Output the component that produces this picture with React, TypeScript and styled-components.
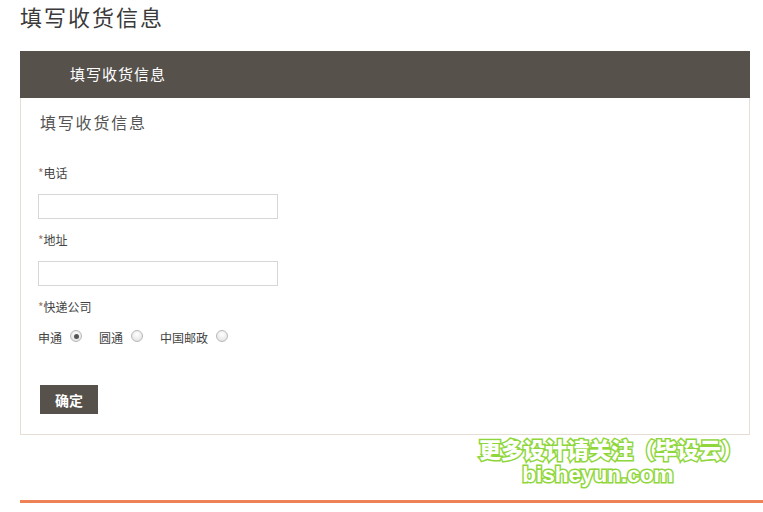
import React from "react";
import styled, { createGlobalStyle } from "styled-components";

const Global = createGlobalStyle`
  html, body { margin: 0; padding: 0; background: #fff; }
  body { font-family: "Noto Sans CJK SC", "Noto Sans", sans-serif; color: #333; }
  * { box-sizing: border-box; }
`;

const Page = styled.div`
  position: relative;
  width: 763px;
  height: 512px;
  padding: 0 13px 0 20px;
  overflow: hidden;
`;

const PageTitle = styled.h1`
  margin: 0;
  padding-top: 1px;
  height: 51px;
  font-size: 22px;
  line-height: 30px;
  letter-spacing: 2px;
  font-weight: 400;
  color: #3a3a3a;
`;

const Bar = styled.div`
  height: 47px;
  background: #57514c;
  color: #fff;
  font-size: 15px;
  line-height: 45px;
  letter-spacing: 1px;
  padding-left: 50px;
`;

const Panel = styled.div`
  border: 1px solid #e6ddd4;
  border-top: none;
  height: 337px;
  padding: 12px 18px 0 17px;
`;

const PanelTitle = styled.h2`
  margin: 0 0 0 2px;
  font-size: 16px;
  line-height: 24px;
  letter-spacing: 1.8px;
  font-weight: 400;
  color: #555;
`;

const Label = styled.div<{ $top: number }>`
  margin-top: ${(p) => p.$top}px;
  font-size: 12px;
  line-height: 16px;
  color: #444;
`;

const Star = styled.span`
  color: #9a7a6a;
`;

const TextInput = styled.input`
  display: block;
  margin-top: 13px;
  width: 240px;
  height: 25px;
  border: 1px solid #d6d6d6;
  outline: none;
  padding: 0 4px;
`;

const RadioRow = styled.div`
  margin-top: 15px;
  display: flex;
  align-items: center;
  font-size: 12px;
  line-height: 16px;
  color: #444;
`;

const RadioItem = styled.label`
  display: flex;
  align-items: center;
  gap: 8px;
  margin-right: 17px;
`;

const RadioDot = styled.span<{ $on?: boolean }>`
  width: 12px;
  height: 12px;
  border-radius: 50%;
  border: 1px solid #b8b8b8;
  background: radial-gradient(circle at 50% 35%, #ffffff 0%, #e2e2e2 85%);
  margin-top: -4px;
  display: flex;
  align-items: center;
  justify-content: center;
  &::after {
    content: "";
    display: ${(p) => (p.$on ? "block" : "none")};
    width: 5px;
    height: 5px;
    border-radius: 50%;
    background: #555;
  }
`;

const Button = styled.button`
  display: block;
  margin: 39px 0 0 2px;
  width: 58px;
  height: 29px;
  background: #57514c;
  border: none;
  color: #fff;
  font-family: inherit;
  font-size: 14px;
  font-weight: 700;
  padding: 0;
`;

const OrangeLine = styled.div`
  margin-top: 65px;
  margin-right: -13px;
  height: 3px;
  background: #ec8256;
`;

const Watermark = styled.div`
  position: absolute;
  left: 479px;
  top: 434px;
  width: 260px;
  text-align: center;
  font-family: "Noto Sans CJK SC", sans-serif;
  font-weight: 900;
  color: #fff;
  -webkit-text-stroke: 3px #8ed63a;
  paint-order: stroke fill;
  pointer-events: none;
`;

const WLine1 = styled.div`
  font-size: 22px;
  line-height: 28px;
`;

const WLine2 = styled.div`
  font-family: "Liberation Sans", Arial, sans-serif;
  font-weight: 700;
  font-size: 22.5px;
  line-height: 26px;
  margin-left: -22px;
`;

export default function App() {
  return (
    <>
      <Global />
      <Page>
        <PageTitle>填写收货信息</PageTitle>
        <Bar>填写收货信息</Bar>
        <Panel>
          <PanelTitle>填写收货信息</PanelTitle>
          <Label $top={31}>
            <Star>*</Star>电话
          </Label>
          <TextInput type="text" />
          <Label $top={13}>
            <Star>*</Star>地址
          </Label>
          <TextInput type="text" />
          <Label $top={13}>
            <Star>*</Star>快递公司
          </Label>
          <RadioRow>
            <RadioItem>
              申通 <RadioDot $on />
            </RadioItem>
            <RadioItem>
              圆通 <RadioDot />
            </RadioItem>
            <RadioItem>
              中国邮政 <RadioDot />
            </RadioItem>
          </RadioRow>
          <Button>确定</Button>
        </Panel>
        <OrangeLine />
        <Watermark>
          <WLine1>更多设计请关注（毕设云）</WLine1>
          <WLine2>bisheyun.com</WLine2>
        </Watermark>
      </Page>
    </>
  );
}
